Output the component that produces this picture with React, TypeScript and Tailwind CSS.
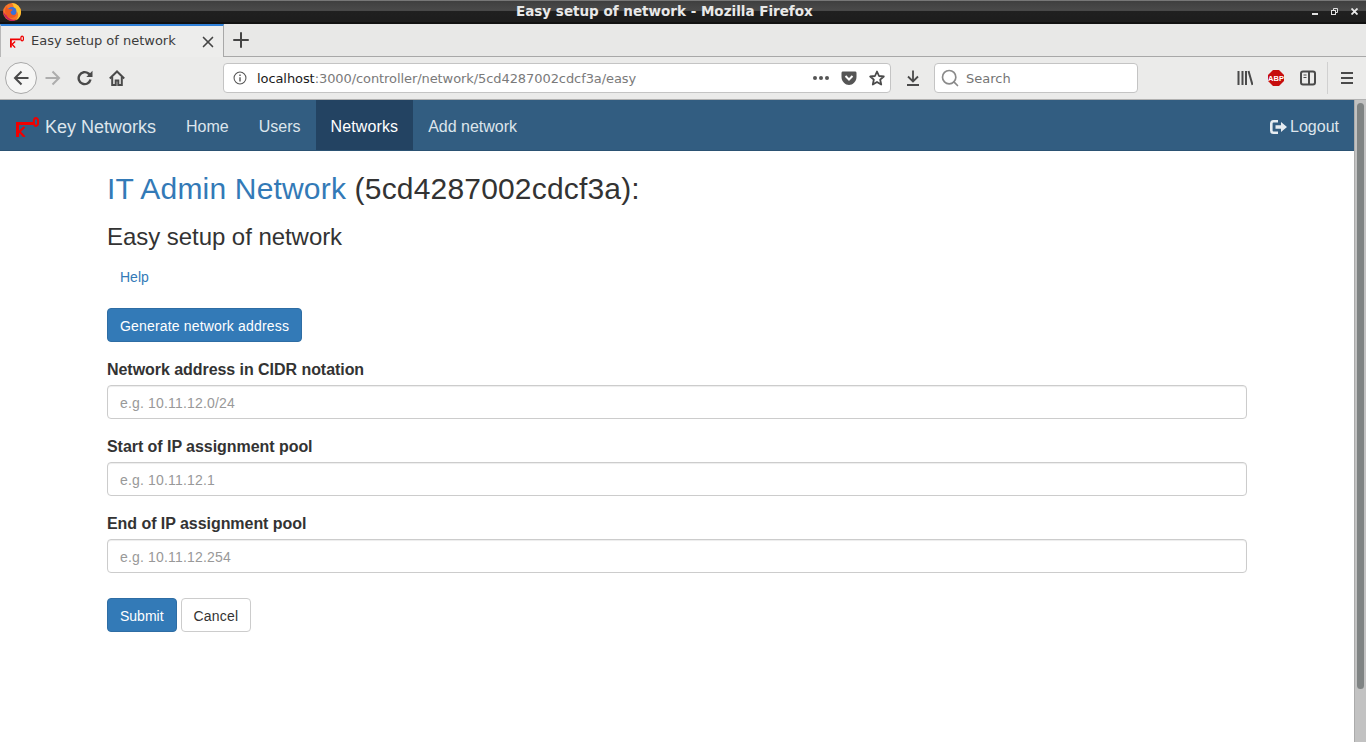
import React from 'react';
import { Plus, X, Search } from 'lucide-react';

const ui = "font-['DejaVu_Sans',sans-serif]";

const KeyLogo = ({ className }: { className?: string }) => (
  <svg viewBox="0 0 23 20" className={className} fill="none" stroke="#f00000">
    <path d="M1.500 20V6.500H17" strokeWidth="3" />
    <ellipse cx="20" cy="5" rx="2.200" ry="4" strokeWidth="2" />
    <path d="M3 15L8.500 10M3 14L8.500 20" strokeWidth="2.200" />
  </svg>
);

const FirefoxLogo = () => (
  <svg viewBox="0 0 20 20" className="w-[18px] h-[18px]">
    <circle cx="10" cy="10" r="10" fill="#f5762a" />
    <path d="M10 0a10 10 0 0 1 10 10c0 4.500-2.500 8-6 9.500 3.500-3.500 3.500-8 1.200-10-1 2-2.200 2.200-3.200 1.200 1-3.500 0-7.500-2-10.700z" fill="#ffc22e" />
    <circle cx="10" cy="9.500" r="5" fill="#3a6fd8" />
    <path d="M4.500 3.500c0 3.500 2.500 3.500 5.500 3.500 1 1 0 2-1.500 2.500C8 12.500 11 14.500 15 12.500c-1 5-9.500 6-12 0C1.500 9 2.500 5.500 4.500 3.500z" fill="#ee5a22" />
    <path d="M.3 9c0 6 4.700 11 9.700 11 2.500 0 4-.7 5-1.700-4.500 1-9.500-1.300-11-4.800C3 13.500 1.300 12 .3 9z" fill="#c9215b" />
  </svg>
);

const TitleBar = () => (
  <div className={`h-6 flex items-center bg-[linear-gradient(#3f3f3f_0%,#4a4a4a_45%,#202020_50%,#1d1d1d_100%)] border-t border-[#777] border-b-2 border-b-[#111] ${ui}`}>
    <div className="w-[516px] pl-[3px] flex items-center">
      <FirefoxLogo />
    </div>
    <div className="text-[13.500px] font-bold text-[#e8e8e8] leading-none whitespace-nowrap">Easy setup of network - Mozilla Firefox</div>
    <div className="ml-auto flex items-center gap-[13px] pr-2">
      <span className="w-[6px] h-[2px] bg-[#e0e0e0] mt-[5px]" />
      <svg viewBox="0 0 7 7" className="w-[7px] h-[7px]" fill="none" stroke="#e0e0e0" strokeWidth="1">
        <rect x="0.500" y="2.500" width="4" height="4" />
        <path d="M2.500 2.500V.5H6.500V4.500H4.500" />
      </svg>
      <svg viewBox="0 0 7 7" className="w-[7px] h-[7px]" fill="none" stroke="#e8e8e8" strokeWidth="1.800">
        <path d="M.5.5L6.500 6.500M6.500.5L.5 6.500" />
      </svg>
    </div>
  </div>
);

const TabBar = () => (
  <div className={`h-[33px] flex bg-[#e8e8e7] border-b border-[#a8a8a8] ${ui}`}>
    <div className="w-[224px] h-[33px] bg-[#ededec] border-t-[2px] border-t-[#2f80d8] border-l border-l-[#b8b8b8] border-r border-r-[#a8a8a8] flex items-center pl-[9px] pr-[6px]">
      <KeyLogo className="w-[14px] h-[13px] mr-[7px]" />
      <span className="text-[13px] text-[#3c3c3c] flex-1 whitespace-nowrap pb-[2px]">Easy setup of network</span>
      <X size={18} className="text-[#444]" strokeWidth={2.200} />
    </div>
    <div className="w-[34px] flex items-center justify-center">
      <Plus size={24} className="text-[#444]" strokeWidth={2} />
    </div>
  </div>
);

const Toolbar = () => (
  <div className={`h-[43px] flex items-center bg-[#ebebea] border-b border-[#b1b1b1] pl-[5px] pr-[13px] ${ui}`}>
    <div className="w-8 h-8 rounded-full border border-[#a9a9a9] bg-[#f6f6f5] flex items-center justify-center">
      <svg viewBox="0 0 16 16" className="w-4 h-4" fill="none" stroke="#4a4a4a" strokeWidth="2">
        <path d="M15.500 8H2M8.500 1.500L2 8L8.500 14.500" />
      </svg>
    </div>
    <svg viewBox="0 0 16 16" className="w-4 h-4 ml-2" fill="none" stroke="#adadad" strokeWidth="2">
      <path d="M.5 8H14M7.500 1.500L14 8L7.500 14.500" />
    </svg>
    <svg viewBox="0 0 16 16" className="w-4 h-4 ml-4" fill="none" stroke="#4a4a4a" strokeWidth="2.400">
      <path d="M13.500 9.500A6 6 0 1 1 11.500 3.500L14 5.500" />
      <path d="M15.500 .8V7H9.300Z" fill="#4a4a4a" strokeWidth="0" />
    </svg>
    <svg viewBox="0 0 16 16" className="w-4 h-4 ml-4" fill="none" stroke="#4a4a4a" strokeWidth="2">
      <path d="M.8 8.500L8 1.500L15.200 8.500" />
      <path d="M3.200 7V15H6.700V10.500H9.300V15H12.800V7" />
    </svg>
    <div className="ml-[98px] w-[668px] h-[30px] bg-white border border-[#c4c4c4] rounded-[4px] flex items-center pl-[9px] pr-[5px]">
      <svg viewBox="0 0 16 16" className="w-[14px] h-[14px]" fill="none" stroke="#555">
        <circle cx="8" cy="8" r="6.800" strokeWidth="1.200" />
        <path d="M8 7V12" strokeWidth="1.600" />
        <path d="M8 4V5.600" strokeWidth="1.600" />
      </svg>
      <div className="ml-[10px] flex-1 text-[13px] tracking-[-0.08px] whitespace-nowrap text-[#7a7a7a] pt-[2px]">
        <span className="text-[#1a1a1a]">localhost</span>:3000/controller/network/5cd4287002cdcf3a/easy
      </div>
      <div className="flex gap-[2px] items-center">
        <span className="w-[4px] h-[4px] rounded-full bg-[#555]" />
        <span className="w-[4px] h-[4px] rounded-full bg-[#555]" />
        <span className="w-[4px] h-[4px] rounded-full bg-[#555]" />
      </div>
      <svg viewBox="0 0 16 16" className="w-4 h-4 ml-3">
        <path d="M1.500 1.500H14.500Q15.500 1.500 15.500 3V7C15.500 11.500 11.500 15 8 15S.5 11.500.5 7V3Q.5 1.500 1.500 1.500Z" fill="#555" />
        <path d="M4.500 6L8 9.500L11.500 6" fill="none" stroke="#fff" strokeWidth="2" />
      </svg>
      <svg viewBox="0 0 16 16" className="w-4 h-4 ml-3" fill="none" stroke="#4a4a4a" strokeWidth="1.800">
        <path d="M8 1.500L10 6L14.800 6.500L11.200 9.700L12.200 14.500L8 12L3.800 14.500L4.800 9.700L1.200 6.500L6 6Z" strokeLinejoin="round" />
      </svg>
    </div>
    <svg viewBox="0 0 16 16" className="w-4 h-4 ml-[14px]" fill="none" stroke="#4a4a4a" strokeWidth="1.800">
      <path d="M8 .5V11M3 6.500L8 11.500L13 6.500M2 15H14" />
    </svg>
    <div className="ml-[13px] w-[204px] h-[30px] bg-white border border-[#c4c4c4] rounded-[4px] flex items-center pl-[5px]">
      <Search size={20} className="text-[#8a8a8a]" strokeWidth={2} />
      <span className="ml-[6px] text-[13px] text-[#757575] pt-[2px]">Search</span>
    </div>
    <div className="ml-auto flex items-center">
      <svg viewBox="0 0 16 16" className="w-4 h-4" fill="none" stroke="#4a4a4a" strokeWidth="2">
        <path d="M1.500 1V15M5.500 1V15M9 1V15M11.500 1L15.500 15" />
      </svg>
      <svg viewBox="0 0 16 16" className="w-4 h-4 ml-[15px]">
        <path d="M5 0H11L16 5V11L11 16H5L0 11V5Z" fill="#c70d0d" />
        <text x="8" y="10.800" textAnchor="middle" fontSize="7.500" fontWeight="700" fill="#fff" fontFamily="Liberation Sans">ABP</text>
      </svg>
      <svg viewBox="0 0 16 16" className="w-4 h-4 ml-4" fill="none" stroke="#4a4a4a">
        <rect x="1" y="1.500" width="14" height="13" rx="2" strokeWidth="2" />
        <path d="M9 2V14" strokeWidth="2" />
        <path d="M3.500 5H6.500M3.500 7.500H6.500" strokeWidth="1" />
      </svg>
      <div className="w-px h-8 bg-[#d0d0d0] ml-[11px]" />
      <svg viewBox="0 0 12 12" className="w-3 h-3 ml-[13px]" fill="none" stroke="#4a4a4a" strokeWidth="2">
        <path d="M0 1H12M0 6H12M0 11H12" />
      </svg>
    </div>
  </div>
);

const NavBar = () => (
  <nav className="h-[51px] bg-[#325d81] border-b border-[#2b5273] flex items-stretch text-[16px] text-[#dde5ec]">
    <div className="flex items-center pl-[16px] pr-[15px] pt-1">
      <KeyLogo className="w-[23px] h-5 mr-[6px]" />
      <span className="text-[18px]">Key Networks</span>
    </div>
    <a className="flex items-center px-[15px] pt-1">Home</a>
    <a className="flex items-center px-[15px] pt-1">Users</a>
    <a className="flex items-center px-[15px] pt-1 bg-[#234362] text-white tracking-[0.12px]">Networks</a>
    <a className="flex items-center px-[15px] pt-1">Add network</a>
    <a className="flex items-center ml-auto px-[15px] pt-1">
      <svg viewBox="0 0 17 14" className="w-[17px] h-[14px] mr-[3px]" fill="none" stroke="#e6ecf1">
        <path d="M8 1.300H3.500Q1.300 1.300 1.300 3.500V10.500Q1.300 12.700 3.500 12.700H8" strokeWidth="2.600" />
        <path d="M5.500 5.300H11V2L17 7L11 12V8.700H5.500Z" fill="#e6ecf1" strokeWidth="0" />
      </svg>
      Logout
    </a>
  </nav>
);

const Field = ({ label, placeholder }: { label: string; placeholder: string }) => (
  <div className="mb-4">
    <label className="block text-[16px] font-bold text-[#333] leading-6 tracking-[-0.05px] mb-[3px]">{label}</label>
    <input
      placeholder={placeholder}
      className="block w-full h-[34px] px-3 pt-[2px] text-[14px] tracking-[0.17px] bg-white border border-[#ccc] rounded-[4px] placeholder:text-[#999] shadow-[inset_0_1px_1px_rgba(0,0,0,0.075)]"
    />
  </div>
);

const Scrollbar = () => (
  <div className="w-3 bg-[#c2c2c2] border-l border-[#ababab] pt-[3px] pl-[2px]">
    <div className="w-[7px] h-[586px] rounded-full bg-[#7f8383]" />
  </div>
);

export default function App() {
  return (
    <div className="w-[1366px] h-[742px] overflow-hidden flex flex-col bg-white font-['Liberation_Sans',sans-serif] text-[#333]">
      <TitleBar />
      <TabBar />
      <Toolbar />
      <div className="flex-1 flex min-h-0">
        <div className="flex-1 min-w-0">
          <NavBar />
          <main className="w-[1140px] mx-auto pt-[20px]">
            <h2 className="text-[30px] leading-[36px] tracking-[0.18px]">
              <a className="text-[#337ab7]">IT Admin Network</a> (5cd4287002cdcf3a):
            </h2>
            <h3 className="text-[24px] leading-[26px] tracking-[-0.05px] mt-[17px]">Easy setup of network</h3>
            <a className="block text-[14px] leading-5 text-[#337ab7] px-[13px] mt-[17px]">Help</a>
            <button className="block mt-[21px] h-[34px] px-3 pt-[2px] text-[14px] tracking-[0.17px] text-white bg-[#337ab7] border border-[#2e6da4] rounded-[4px]">
              Generate network address
            </button>
            <form className="mt-[16px]">
              <Field label="Network address in CIDR notation" placeholder="e.g. 10.11.12.0/24" />
              <Field label="Start of IP assignment pool" placeholder="e.g. 10.11.12.1" />
              <Field label="End of IP assignment pool" placeholder="e.g. 10.11.12.254" />
              <div className="flex gap-1 mt-[25px]">
                <button type="button" className="h-[34px] px-3 pt-[2px] text-[14px] text-white bg-[#337ab7] border border-[#2e6da4] rounded-[4px]">Submit</button>
                <button type="button" className="h-[34px] px-3 pt-[2px] text-[14px] tracking-[0.17px] text-[#333] bg-white border border-[#ccc] rounded-[4px]">Cancel</button>
              </div>
            </form>
          </main>
        </div>
        <Scrollbar />
      </div>
    </div>
  );
}
